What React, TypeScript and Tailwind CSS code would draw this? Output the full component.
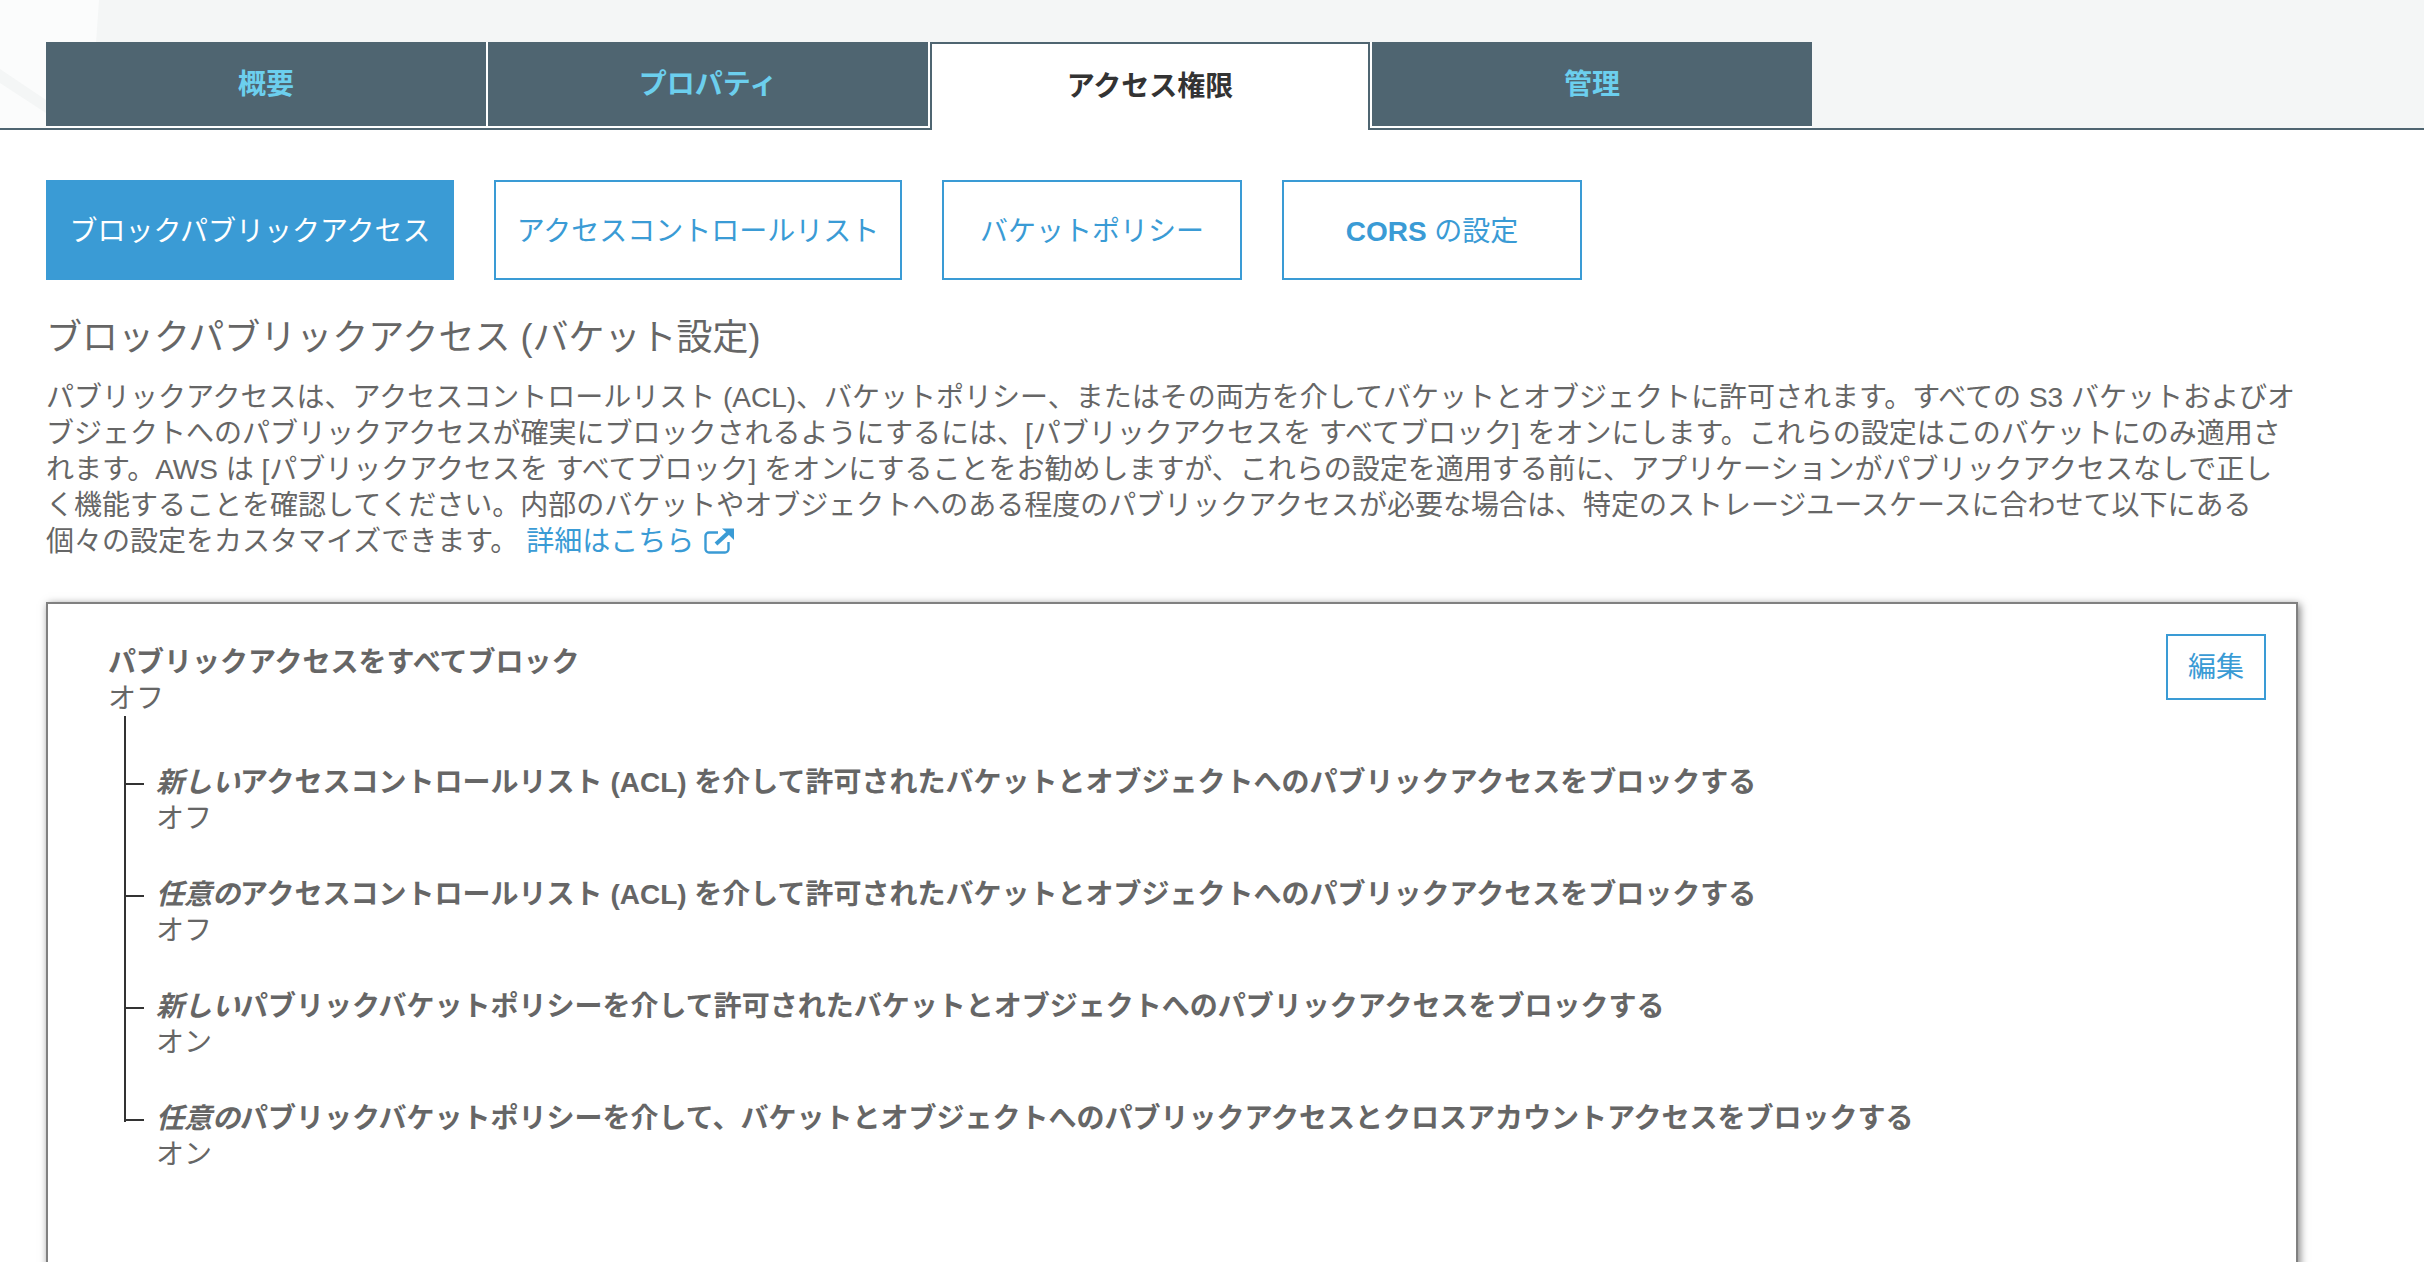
const tabs = ["概要", "プロパティ", "アクセス権限", "管理"];

const settings = [
  { lead: "新しい", rest: "アクセスコントロールリスト (ACL) を介して許可されたバケットとオブジェクトへのパブリックアクセスをブロックする", value: "オフ" },
  { lead: "任意の", rest: "アクセスコントロールリスト (ACL) を介して許可されたバケットとオブジェクトへのパブリックアクセスをブロックする", value: "オフ" },
  { lead: "新しい", rest: "パブリックバケットポリシーを介して許可されたバケットとオブジェクトへのパブリックアクセスをブロックする", value: "オン" },
  { lead: "任意の", rest: "パブリックバケットポリシーを介して、バケットとオブジェクトへのパブリックアクセスとクロスアカウントアクセスをブロックする", value: "オン" },
];

function ExternalIcon() {
  return (
    <svg viewBox="0 0 30 26" className="inline-block w-[30px] h-[26px] ml-[10px] align-[-3px]">
      <path d="M14 4.5H5a3.5 3.5 0 0 0-3.5 3.5v13A3.5 3.5 0 0 0 5 24.500h16a3.500 3.500 0 0 0 3.500-3.500v-7" fill="none" stroke="#3a9bd5" strokeWidth="2.4" />
      <path d="M12 16L24 5" fill="none" stroke="#3a9bd5" strokeWidth="4" />
      <path d="M18 0.500H30V12L26 8L22 4z" fill="#3a9bd5" />
    </svg>
  );
}

export default function App() {
  return (
    <div lang="ja" className="h-[1262px] overflow-hidden bg-white text-[28px] leading-[36.4px] text-[#666] font-['Liberation_Sans','Noto_Sans_CJK_JP',sans-serif]">
      <div className="relative h-[130px] border-b-2 border-[#4f6571] bg-[#f4f6f6] pt-[42px] pl-[46px]">
        <svg viewBox="0 0 100 128" className="absolute left-0 top-0 w-[100px] h-[128px]">
          <polygon points="0,0 99,0 90,128 0,128" fill="#fbfcfc" />
          <polygon points="0,69 46,100 46,113 0,83" fill="#f4f6f6" />
        </svg>
        <div className="relative flex items-start">
          {tabs.map((tab, i) =>
            i === 2 ? (
              <div key={tab} className="flex h-[88px] w-[440px] items-center justify-center border-2 border-b-0 border-[#4f6571] bg-white font-bold text-[#333]">
                {tab}
              </div>
            ) : (
              <div key={tab} className={`flex h-[86px] w-[442px] items-center justify-center border-b-2 border-white bg-[#4f6571] pt-[2px] font-bold text-[#6ccfee] ${i === 3 ? "border-l-2" : "border-r-2"}`}>
                {tab}
              </div>
            )
          )}
        </div>
      </div>

      <div className="px-[46px]">
        <div className="mt-[50px] flex gap-[40px]">
          <div className="flex h-[100px] w-[408px] items-center justify-center border-2 border-[#3a9bd5] bg-[#3a9bd5] pt-[4px] text-white">ブロックパブリックアクセス</div>
          <div className="flex h-[100px] w-[408px] items-center justify-center border-2 border-[#3a9bd5] bg-white pt-[4px] text-[#3a9bd5]">アクセスコントロールリスト</div>
          <div className="flex h-[100px] w-[300px] items-center justify-center border-2 border-[#3a9bd5] bg-white pt-[4px] text-[#3a9bd5]">バケットポリシー</div>
          <div className="flex h-[100px] w-[300px] items-center justify-center whitespace-pre border-2 border-[#3a9bd5] bg-white pt-[4px] text-[#3a9bd5]"><b>CORS</b> の設定</div>
        </div>

        <h2 className="mt-[34px] text-[36px] leading-[47px]">ブロックパブリックアクセス (バケット設定)</h2>

        <p className="mt-[19px] whitespace-nowrap leading-[36px]">
          パブリックアクセスは、アクセスコントロールリスト (ACL)、バケットポリシー、またはその両方を介してバケットとオブジェクトに許可されます。すべての S3 バケットおよびオ<br />
          ブジェクトへのパブリックアクセスが確実にブロックされるようにするには、[パブリックアクセスを すべてブロック] をオンにします。これらの設定はこのバケットにのみ適用さ<br />
          れます。AWS は [パブリックアクセスを すべてブロック] をオンにすることをお勧めしますが、これらの設定を適用する前に、アプリケーションがパブリックアクセスなしで正し<br />
          く機能することを確認してください。内部のバケットやオブジェクトへのある程度のパブリックアクセスが必要な場合は、特定のストレージユースケースに合わせて以下にある<br />
          個々の設定をカスタマイズできます。 <span className="text-[#3a9bd5]">詳細はこちら<ExternalIcon /></span>
        </p>

        <div className="mt-[42px] h-[800px] w-[2252px] border-2 border-[#808080] bg-white pt-[30px] pr-[30px] pl-[60px] shadow-[2px_2px_8px_rgba(0,0,0,0.5)]">
          <div className="flex items-start justify-between">
            <div className="pt-[11px]">
              <div className="font-bold">パブリックアクセスをすべてブロック</div>
              <div>オフ</div>
            </div>
            <div className="flex h-[66px] w-[100px] items-center justify-center border-2 border-[#3a9bd5] pt-[2px] text-[#3a9bd5]">編集</div>
          </div>

          <div className="relative mt-[-2px] ml-[16px] pl-[32px]">
            <div className="absolute left-0 top-0 h-[406px] w-[2px] bg-[#333]" />
            {settings.map((s, i) => (
              <div key={i} className="relative h-[112px] pt-[49px]">
                <div className="absolute left-[-32px] top-[67px] h-[2px] w-[20px] bg-[#333]" />
                <div className="font-bold whitespace-nowrap"><i>{s.lead}</i>{s.rest}</div>
                <div>{s.value}</div>
              </div>
            ))}
          </div>
        </div>
      </div>
    </div>
  );
}
